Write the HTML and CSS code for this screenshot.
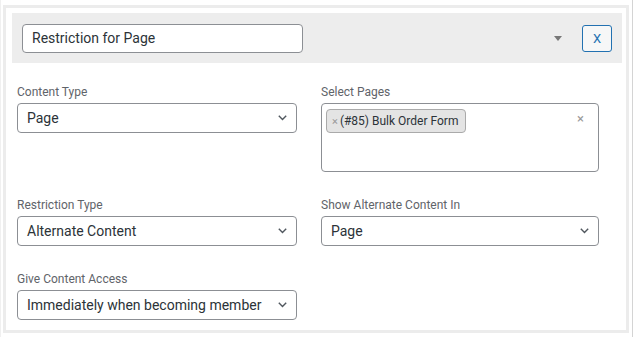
FILE: index.html
```html
<!DOCTYPE html>
<html lang="en">
<head>
  <meta charset="UTF-8" />
  <meta name="viewport" content="width=device-width, initial-scale=1.0" />
  <title>Restriction for Page</title>
  <link rel="stylesheet" href="styles.css">
</head>
<body>
  <div class="outer">
    <div class="card">
      <div class="header">
        <div class="title-input">Restriction for Page</div>
        <span class="toggle"></span>
        <button class="remove">X</button>
      </div>

      <div class="fields">
        <div class="field">
          <label>Content Type</label>
          <div class="select">
            <span>Page</span>
            <svg class="chev" width="9" height="6" viewBox="0 0 9 6"><path d="M0.8 0.8 L4.5 4.5 L8.2 0.8" /></svg>
          </div>
        </div>
        <div class="field">
          <label>Select Pages</label>
          <div class="multi">
            <span class="chip"><span class="chip-x">×</span>(#85) Bulk Order Form</span>
            <span class="clear">×</span>
          </div>
        </div>
        <div class="field">
          <label>Restriction Type</label>
          <div class="select">
            <span>Alternate Content</span>
            <svg class="chev" width="9" height="6" viewBox="0 0 9 6"><path d="M0.8 0.8 L4.5 4.5 L8.2 0.8" /></svg>
          </div>
        </div>
        <div class="field">
          <label>Show Alternate Content In</label>
          <div class="select">
            <span>Page</span>
            <svg class="chev" width="9" height="6" viewBox="0 0 9 6"><path d="M0.8 0.8 L4.5 4.5 L8.2 0.8" /></svg>
          </div>
        </div>
        <div class="field">
          <label>Give Content Access</label>
          <div class="select">
            <span>Immediately when becoming member</span>
            <svg class="chev" width="9" height="6" viewBox="0 0 9 6"><path d="M0.8 0.8 L4.5 4.5 L8.2 0.8" /></svg>
          </div>
        </div>
      </div>
    </div>
  </div>
</body>
</html>
```

FILE: styles.css
```css
* {
  box-sizing: border-box;
}
body {
  margin: 0;
  background: #fff;
  font-family: Roboto, "Noto Sans", Arial, sans-serif;
  color: #2c3338;
}
.outer {
  width: 633px;
  height: 337px;
  border-left: 1px solid #f0f0f0;
  border-right: 1px solid #d4d4d4;
  padding: 5px 0 0 2px;
}
.card {
  width: 626px;
  height: 328px;
  border: 3px solid #ececec;
}
.header {
  margin: 5px 4px 0 6px;
  height: 50px;
  background: #ededed;
  display: flex;
  align-items: center;
  padding: 0 10px;
}
.title-input {
  width: 281px;
  height: 29px;
  background: #fff;
  border: 1px solid #8c8f94;
  border-radius: 4px;
  font-size: 14px;
  line-height: 27px;
  padding-left: 9px;
}
.toggle {
  margin-left: auto;
  margin-right: 20px;
  width: 0;
  height: 0;
  border-left: 4px solid transparent;
  border-right: 4px solid transparent;
  border-top: 5px solid #777;
}
.remove {
  width: 30px;
  height: 27px;
  background: #f6f7f7;
  border: 1px solid #2271b1;
  border-radius: 3px;
  color: #2271b1;
  font-family: Roboto, Arial, sans-serif;
  font-size: 13px;
  padding: 0;
}
.fields {
  padding: 19px 0 0 11px;
  display: grid;
  grid-template-columns: 280px 278px;
  column-gap: 24px;
  row-gap: 23px;
  align-items: start;
}
.field label {
  display: block;
  font-size: 12px;
  line-height: 16px;
  color: #5f646a;
  margin: 2px 0 3px;
}
.select {
  height: 30px;
  border: 1px solid #8c8f94;
  border-radius: 4px;
  display: flex;
  align-items: center;
  justify-content: space-between;
  padding: 0 9px 0 9px;
  font-size: 14px;
}
.chev path {
  fill: none;
  stroke: #50575e;
  stroke-width: 1.4;
}
.multi {
  height: 69px;
  border: 1px solid #8c8f94;
  border-radius: 4px;
  display: flex;
  align-items: flex-start;
  justify-content: space-between;
  padding: 5px 14px 0 4px;
}
.chip {
  display: inline-flex;
  align-items: center;
  height: 24px;
  background: #e4e4e4;
  border: 1px solid #aaa;
  border-radius: 4px;
  padding: 0 7px 0 5px;
  font-size: 12px;
}
.chip-x {
  color: #999;
  font-size: 11px;
  margin-right: 2px;
}
.clear {
  color: #999;
  font-size: 13px;
  line-height: 18px;
  margin-top: 1px;
}
```
